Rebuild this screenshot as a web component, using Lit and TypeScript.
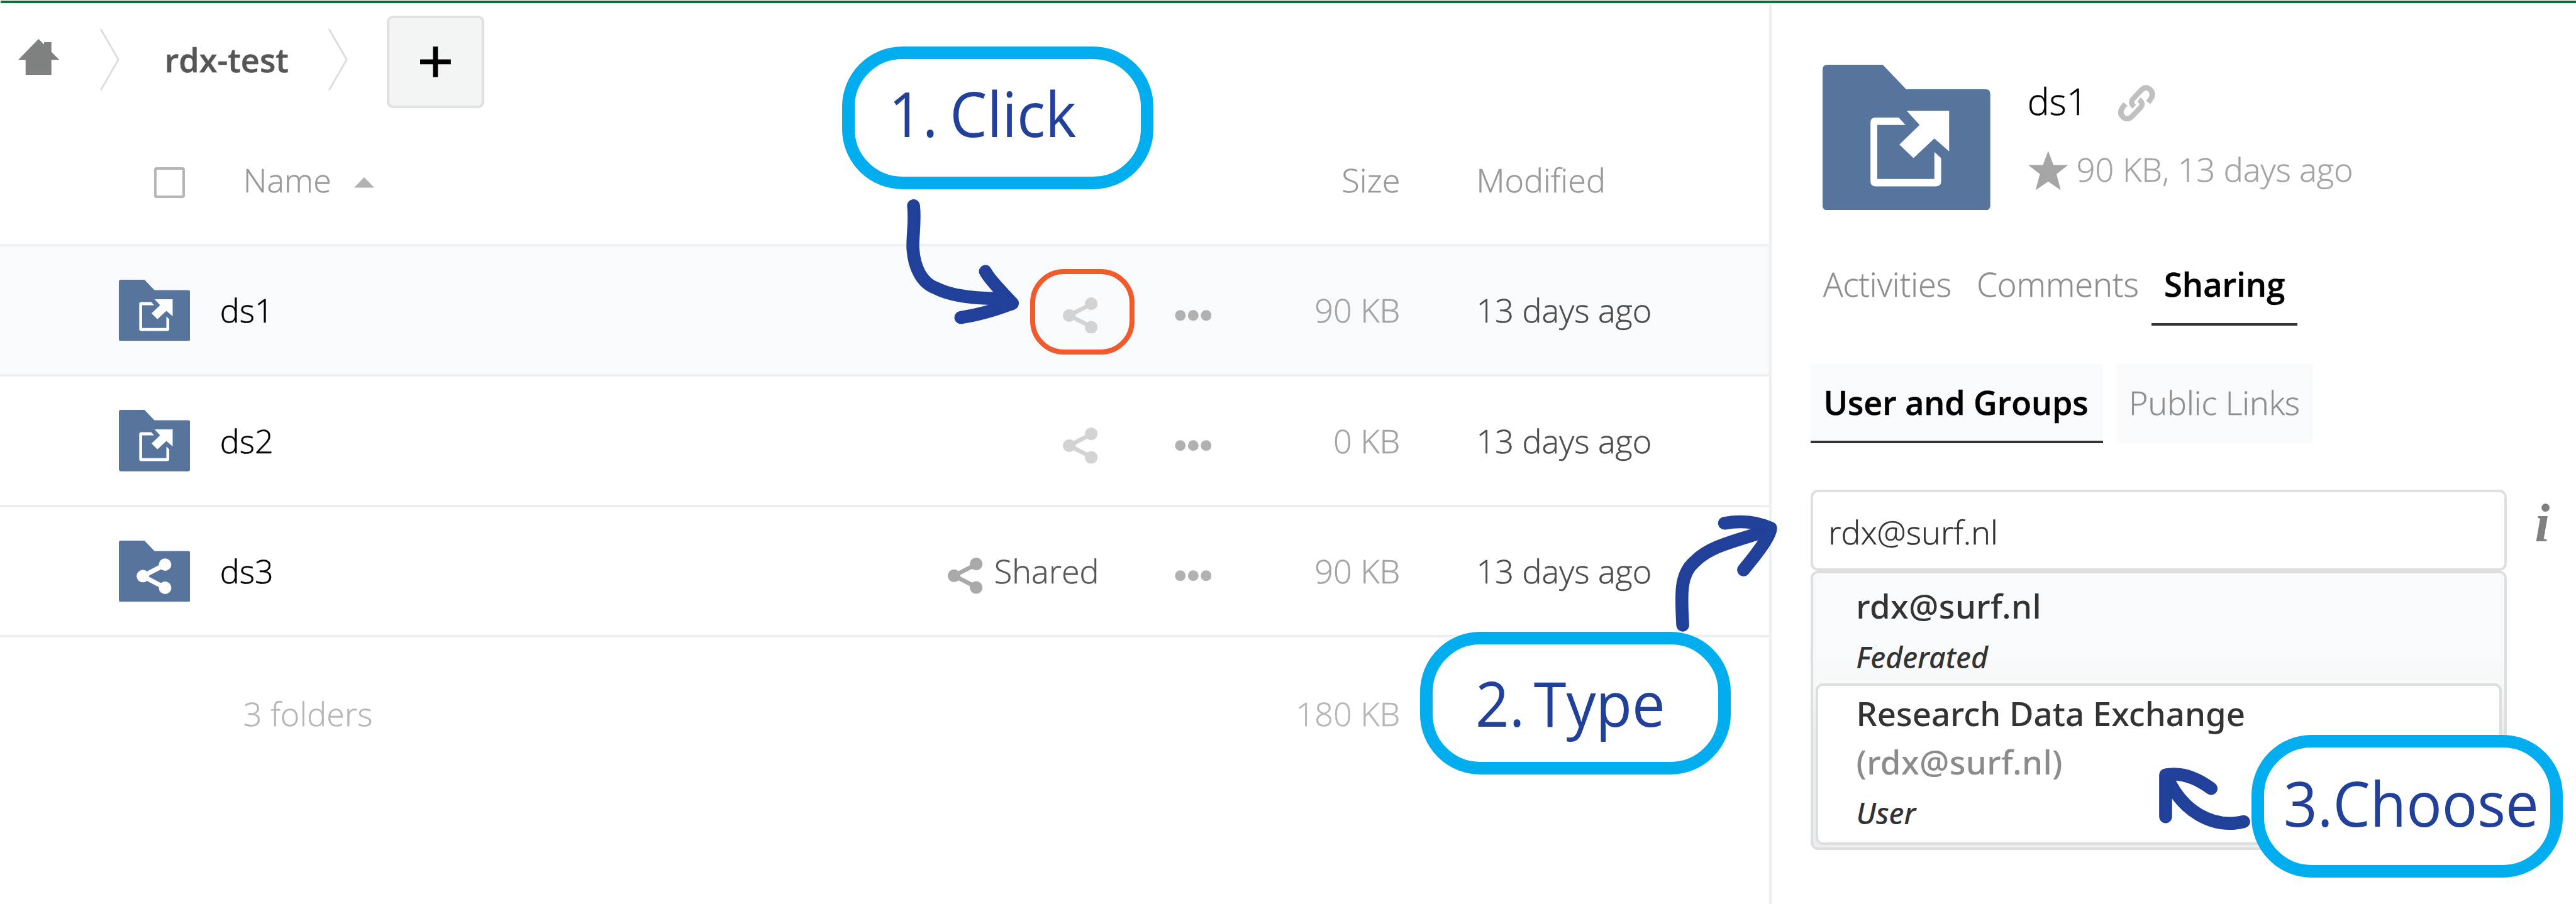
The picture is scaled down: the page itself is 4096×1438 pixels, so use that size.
import { LitElement, html, css, svg } from "lit";
import { customElement } from "lit/decorators.js";

interface FileRow {
  name: string;
  kind: "external" | "shared";
  size: string;
  modified: string;
  shared: boolean;
  selected: boolean;
}

const FILES: FileRow[] = [
  { name: "ds1", kind: "external", size: "90 KB", modified: "13 days ago", shared: false, selected: true },
  { name: "ds2", kind: "external", size: "0 KB", modified: "13 days ago", shared: false, selected: false },
  { name: "ds3", kind: "shared", size: "90 KB", modified: "13 days ago", shared: true, selected: false },
];

const externalGlyph = svg`
  <path fill="#fff" d="M124 86 H86 Q78 86 78 94 V190 Q78 198 86 198 H185 Q193 198 193 190 V152 L182 142 V186 H89 V98 H135 Z"/>
  <path fill="#fff" d="M137 75 H206 V141 L182 120 L148 152 L125 130 L158 98 Z"/>`;

const sharedGlyph = svg`
  <path d="M177 92.5 L92 137 L177 182" fill="none" stroke="#fff" stroke-width="18"/>
  <circle cx="92" cy="137" r="24" fill="#fff"/>
  <circle cx="177" cy="92.5" r="24" fill="#fff"/>
  <circle cx="177" cy="182" r="24" fill="#fff"/>`;

const folder = (kind: string, cls: string) => html`
  <svg class=${cls} viewBox="0 0 273 237" preserveAspectRatio="none">
    <path fill="#57749d" d="M8 0 H98 L136 40 H266 Q273 40 273 48 V229 Q273 237 265 237 H8 Q0 237 0 229 V8 Q0 0 8 0 Z"/>
    ${kind === "external" ? externalGlyph : sharedGlyph}
  </svg>`;

const shareIcon = html`
  <svg class="share-icon" viewBox="0 0 58 60">
    <path d="M47.5 11 L10.5 30 L47.5 49" fill="none" stroke="currentColor" stroke-width="7"/>
    <circle cx="10.5" cy="30" r="10.5" fill="currentColor"/>
    <circle cx="47" cy="10.5" r="10.5" fill="currentColor"/>
    <circle cx="47" cy="49.5" r="10.5" fill="currentColor"/>
  </svg>`;

const dots = html`
  <svg class="dots" viewBox="0 0 60 18">
    <circle cx="9" cy="9" r="8.7"/><circle cx="30" cy="9" r="8.7"/><circle cx="51" cy="9" r="8.7"/>
  </svg>`;

const chevron = html`
  <svg class="chevron" viewBox="0 0 32 100">
    <path d="M1 0 L30 50 L1 100" fill="none" stroke="#dcdedd" stroke-width="3"/>
  </svg>`;

@customElement("file-list")
export class FileList extends LitElement {
  static styles = css`
    :host { display: block; color: #4c4c4c; font-weight: 300; font-size: 53.4px; line-height: 74px; -webkit-text-stroke: 0.5px currentColor; }
    svg { display: block; flex: none; }
    .crumbs { height: 184px; box-sizing: border-box; padding-left: 30px; display: flex; align-items: center; }
    .home { width: 67px; height: 59px; margin-right: 66px; margin-top: -9px; }
    .chevron { width: 32px; height: 100px; }
    .crumb { font-weight: 600; color: #555756; width: 266px; margin-left: 73px; }
    .add { width: 158px; height: 150px; box-sizing: border-box; border: 4.2px solid #dfe1e0; border-radius: 10px; background: #f3f5f4; margin-left: 64px; margin-top: 8px; display: grid; place-items: center; padding: 0; }
    .plus { width: 50px; height: 50px; }
    .row { height: 212.33px; box-sizing: border-box; border-top: 4.2px solid #eeeff0; display: grid; grid-template-columns: 193px 165px auto 1fr 185px 307px 124px 477px; align-items: center; }
    .row.head { grid-template-columns: 251px 145px 1fr 306px 124px 477px; color: #999; height: 208px; border: 0; }
    .row.selected { background: #f9fafc; }
    .row.foot { grid-template-columns: 396px 1fr 306px 601px; color: #b5b7b6; height: 250px; align-items: start; padding-top: 87px; }
    .check { width: 50px; height: 50px; box-sizing: border-box; border: 4.2px solid #b5b7b6; border-radius: 4px; margin-top: 9px; grid-column: 2; }
    .name-head { display: flex; align-items: center; }
    .caret { width: 33px; height: 17px; margin-left: 37px; margin-top: 9px; }
    .folder { width: 116px; height: 100px; grid-column: 2; }
    .name { color: #000; }
    .status { display: flex; justify-content: flex-end; align-items: center; gap: 19px; color: #565656; }
    .shared { margin-right: -2px; }
    .share-icon { width: 57px; height: 59px; margin-top: 16px; color: #d3d3d3; }
    .shared .share-icon { color: #a9a9a8; }
    .dots { width: 60px; height: 18px; margin-top: 16px; fill: #b1b1b1; justify-self: end; }
    .size { white-space: nowrap; color: #a3a3a3; justify-self: end; }
    .head .size, .foot .size { color: inherit; }
    .modified { white-space: nowrap; grid-column: -2; }
  `;

  render() {
    return html`
      <nav class="crumbs">
        <svg class="home" viewBox="0 0 67 59"><path fill="#7f8180" d="M33 0 L42 9 V5 H54 V21 L67 34 H54 V59 H12 V34 H0 Z"/></svg>
        ${chevron}
        <span class="crumb">rdx-test</span>
        ${chevron}
        <button class="add" aria-label="New">
          <svg class="plus" viewBox="0 0 50 50"><path d="M21 0 H29 V21 H50 V29 H29 V50 H21 V29 H0 V21 H21 Z"/></svg>
        </button>
      </nav>
      <div class="row head">
        <span class="check"></span>
        <span class="name-head">Name<svg class="caret" viewBox="0 0 33 17"><path fill="#b1b3b2" d="M16.5 0 L33 17 H0 Z"/></svg></span>
        <span class="size">Size</span>
        <span class="modified">Modified</span>
      </div>
      ${FILES.map((f) => html`
        <div class="row ${f.selected ? "selected" : ""}">
          ${folder(f.kind, "folder")}
          <span class="name">${f.name}</span>
          <span class="status ${f.shared ? "shared" : ""}">${shareIcon}${f.shared ? html`<span>Shared</span>` : ""}</span>
          ${dots}
          <span class="size">${f.size}</span>
          <span class="modified">${f.modified}</span>
        </div>`)}
      <div class="row foot">
        <span></span>
        <span>3 folders</span>
        <span class="size">180 KB</span>
      </div>`;
  }
}

@customElement("share-panel")
export class SharePanel extends LitElement {
  static styles = css`
    :host { display: block; border-left: 4.2px solid #eeeff1; padding-left: 63px; font-size: 53.4px; font-weight: 300; line-height: 74px; color: #8d8d8d; -webkit-text-stroke: 0.5px currentColor; }
    svg { display: block; flex: none; }
    .summary { display: flex; padding: 100px 0 0 20px; gap: 60px; }
    .folder { width: 273px; height: 237px; }
    .title { display: flex; align-items: center; font-size: 60px; line-height: 74px; color: #000; gap: 50px; margin-top: 22px; }
    .link { width: 60px; height: 60px; margin-top: 8px; }
    .meta { display: flex; align-items: center; color: #a3a3a3; gap: 14px; margin-top: 38px; }
    .star { width: 65px; height: 64px; margin: 4px 0 0 1px; }
    .tabs { display: flex; margin-top: 84px; font-size: 53.7px; }
    .tab { box-sizing: border-box; padding: 0 20.5px; height: 104px; border-bottom: 4.2px solid transparent; }
    .tab.active { color: #000; font-weight: 600; border-color: #333; }
    .subtabs { display: flex; gap: 21px; margin-top: 63px; }
    .subtab { box-sizing: border-box; height: 129px; padding: 25px 21px 0 21px; font-size: 53.2px; background: #f9fafc; border-bottom: 4.2px solid transparent; }
    .subtab.active { color: #000; font-weight: 600; border-color: #333; padding-right: 24px; }
    .field { display: flex; margin-top: 75px; }
    .input { width: 1133px; height: 133px; box-sizing: border-box; border: 4.2px solid #dedfe0; border-radius: 12px; padding: 28px 25px 0; color: #333; }
    .info { font: italic bold 88px/88px "Liberation Serif", serif; color: #808080; margin: 12px 0 0 46px; -webkit-text-stroke: 0; }
    .menu { width: 1133px; height: 454px; box-sizing: border-box; border: 4.2px solid #dcdee0; border-radius: 12px; background: linear-gradient(#f9fafc 0 130px, #f7f8f8 180px, #ecedef 260px); padding: 4px; font-family: "Noto Sans", sans-serif; font-weight: 500; font-size: 54px; color: #333; -webkit-text-stroke: 0; }
    .option { height: 175px; box-sizing: border-box; padding: 14px 66px 0; }
    .option.focus { height: 263px; border: 4.2px solid #dcdee0; border-radius: 12px; background: #fff; padding: 10px 62px 0; }
    .line { height: 78.6px; line-height: 70px; white-space: nowrap; }
    .line.mail { letter-spacing: 0.4px; }
    .line.dim { color: #8b8b8b; }
    .line.kind { font-size: 47.5px; font-style: italic; margin-top: 4.5px; }
  `;

  render() {
    return html`
      <div class="summary">
        ${folder("external", "folder")}
        <div>
          <div class="title">ds1
            <svg class="link" viewBox="0 0 174 174">
              <g fill="none" stroke="#c0c0c0" stroke-width="25">
                <path d="M76 103 Q54 84 70 66 L108 26 Q126 6 147 19 Q172 38 154 66 L142 83"/>
                <path d="M98 70 Q122 86 106 107 L66 148 Q48 168 27 155 Q2 136 20 108 L34 90"/>
              </g>
            </svg>
          </div>
          <div class="meta">
            <svg class="star" viewBox="0 0 65 64"><path fill="#a4a5a4" d="M32.5 0 L41 23 H65 L46 38 L53 64 L32.5 50 L12 64 L19 38 L0 23 H24 Z"/></svg>
            <span>90 KB, 13 days ago</span>
          </div>
        </div>
      </div>
      <div class="tabs">
        <div class="tab">Activities</div>
        <div class="tab">Comments</div>
        <div class="tab active">Sharing</div>
      </div>
      <div class="subtabs">
        <div class="subtab active">User and Groups</div>
        <div class="subtab">Public Links</div>
      </div>
      <div class="field">
        <div class="input">rdx@surf.nl</div>
        <span class="info">i</span>
      </div>
      <div class="menu">
        <div class="option">
          <div class="line mail">rdx@surf.nl</div>
          <div class="line kind">Federated</div>
        </div>
        <div class="option focus">
          <div class="line">Research Data Exchange</div>
          <div class="line mail dim">(rdx@surf.nl)</div>
          <div class="line kind">User</div>
        </div>
      </div>`;
  }
}

@customElement("app-root")
export class AppRoot extends LitElement {
  static styles = css`
    :host { display: block; width: 4096px; height: 1438px; overflow: hidden; background: #fff; font-family: "Open Sans", sans-serif; }
    .page { position: relative; width: 4193px; height: 1472px; zoom: 0.97687; border-top: 1px solid #fff; box-sizing: border-box; }
    .bar { height: 4px; background: #0b7336; margin-left: 1px; }
    .columns { display: grid; grid-template-columns: 2880px 1fr; height: 1467px; }
    .callout { position: absolute; width: 506px; height: 232px; box-sizing: border-box; border: 21px solid #00aeef; border-radius: 98px; background: #fff; color: #21409a; font-size: 102px; line-height: 140px; white-space: nowrap; }
    .label { display: inline-block; transform: scaleX(0.943); transform-origin: left; }
    .click { left: 1371px; top: 75px; padding: 18px 0 0 55px; word-spacing: -6px; }
    .type { left: 2311px; top: 1028px; padding: 25px 0 0 70px; word-spacing: -11px; }
    .choose { left: 3665px; top: 1196px; padding: 20px 0 0 31px; }
    .ring { position: absolute; left: 1677px; top: 437px; width: 170px; height: 139px; box-sizing: border-box; border: 8.5px solid #f15a2b; border-radius: 55px; }
    .arrows { position: absolute; left: 0; top: -1px; width: 4193px; height: 1472px; }
  `;

  render() {
    return html`
      <div class="page">
        <div class="bar"></div>
        <div class="columns">
          <file-list></file-list>
          <share-panel></share-panel>
        </div>
        <div class="ring"></div>
        <div class="callout click"><span class="label">1. Click</span></div>
        <div class="callout type"><span class="label">2. Type</span></div>
        <svg class="arrows" viewBox="0 0 4193 1472" fill="none" stroke="#21409a" stroke-width="21" stroke-linecap="round" stroke-linejoin="round">
          <path d="M1487 335 C1490 362 1485 385 1486 405 C1488 435 1500 461 1523 469 C1548 482 1585 487 1640 486"/>
          <path d="M1604 442 Q1608 452 1648 494 Q1605 511 1564 517"/>
          <path d="M1630 483 L1646 495 L1632 497 Z"/>
          <path d="M2739 1018 C2736 965 2735 935 2758 915 C2782 890 2820 882 2874 865"/>
          <path d="M2807 852 Q2850 845 2882 860 Q2884 872 2838 928"/>
          <path d="M3652 1338 C3600 1350 3550 1320 3526 1262"/>
          <path d="M3525 1330 V1262 Q3560 1255 3599 1284"/>
        </svg>
        <div class="callout choose"><span class="label">3.Choose</span></div>
      </div>`;
  }
}
